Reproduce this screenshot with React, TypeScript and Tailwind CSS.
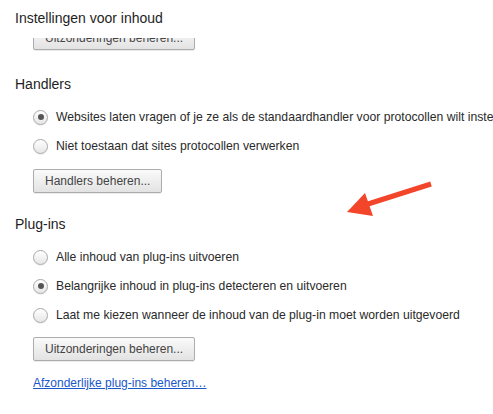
import React from "react";

const font = { fontFamily: '"Liberation Sans", Arial, Helvetica, sans-serif' };

function Radio({ checked }: { checked?: boolean }) {
  return (
    <span className="relative flex h-[15px] w-[15px] shrink-0 items-center justify-center rounded-full border border-[#a9a9a9] bg-gradient-to-b from-[#ffffff] to-[#e6e6e6] shadow-[0_1px_0_rgba(0,0,0,0.06)]">
      {checked && <span className="h-[6px] w-[6px] rounded-full bg-[#555555]" />}
    </span>
  );
}

function RadioRow({ label, checked }: { label: string; checked?: boolean }) {
  return (
    <div className="flex h-[20px] items-center gap-[8px] whitespace-nowrap">
      <Radio checked={checked} />
      <span className="text-[12.2px] leading-[16px] text-[#2a2a2a]">{label}</span>
    </div>
  );
}

function Btn({ label, className = "" }: { label: string; className?: string }) {
  return (
    <div
      className={
        "flex h-[24px] w-fit items-center rounded-[2px] border border-[#acacac] bg-gradient-to-b from-[#fafafa] to-[#e3e3e3] px-[11px] text-[12px] leading-[16px] text-[#444444] shadow-[0_1px_0_rgba(0,0,0,0.08)] " +
        className
      }
    >
      {label}
    </div>
  );
}

export default function App() {
  return (
    <div className="relative h-[414px] w-[493px] overflow-hidden bg-white" style={font}>
      <div className="h-[38px] bg-white px-[15px] pt-[10px] text-[14px] leading-[16px] text-[#1e1e1e]">
        Instellingen voor inhoud
      </div>
      <div className="h-[376px] overflow-hidden pl-[33px]">
        <Btn label="Uitzonderingen beheren..." className="mt-[-12px]" />

        <div className="-ml-[18px] mt-[26px] text-[14px] leading-[16px] text-[#1e1e1e]">Handlers</div>
        <div className="mt-[15px] flex flex-col gap-[9px]">
          <RadioRow checked label="Websites laten vragen of je ze als de standaardhandler voor protocollen wilt instellen (aanbevolen)" />
          <RadioRow label="Niet toestaan dat sites protocollen verwerken" />
        </div>
        <Btn label="Handlers beheren..." className="mt-[13px]" />

        <div className="-ml-[18px] mt-[23px] text-[14px] leading-[16px] text-[#1e1e1e]">Plug-ins</div>
        <div className="mt-[15px] flex flex-col gap-[9px]">
          <RadioRow label="Alle inhoud van plug-ins uitvoeren" />
          <RadioRow checked label="Belangrijke inhoud in plug-ins detecteren en uitvoeren" />
          <RadioRow label="Laat me kiezen wanneer de inhoud van de plug-in moet worden uitgevoerd" />
        </div>
        <Btn label="Uitzonderingen beheren..." className="mt-[12px]" />
        <div className="mt-[14px] text-[12px] leading-[16px] text-[#1a57c9] underline">
          Afzonderlijke plug-ins beheren…
        </div>
      </div>

      <svg className="absolute left-0 top-0" width="493" height="414" viewBox="0 0 493 414">
        <line x1="431" y1="184" x2="368" y2="204" stroke="#f2452a" strokeWidth="5" />
        <polygon points="347,212 365,193 373,216" fill="#f2452a" />
      </svg>
    </div>
  );
}
